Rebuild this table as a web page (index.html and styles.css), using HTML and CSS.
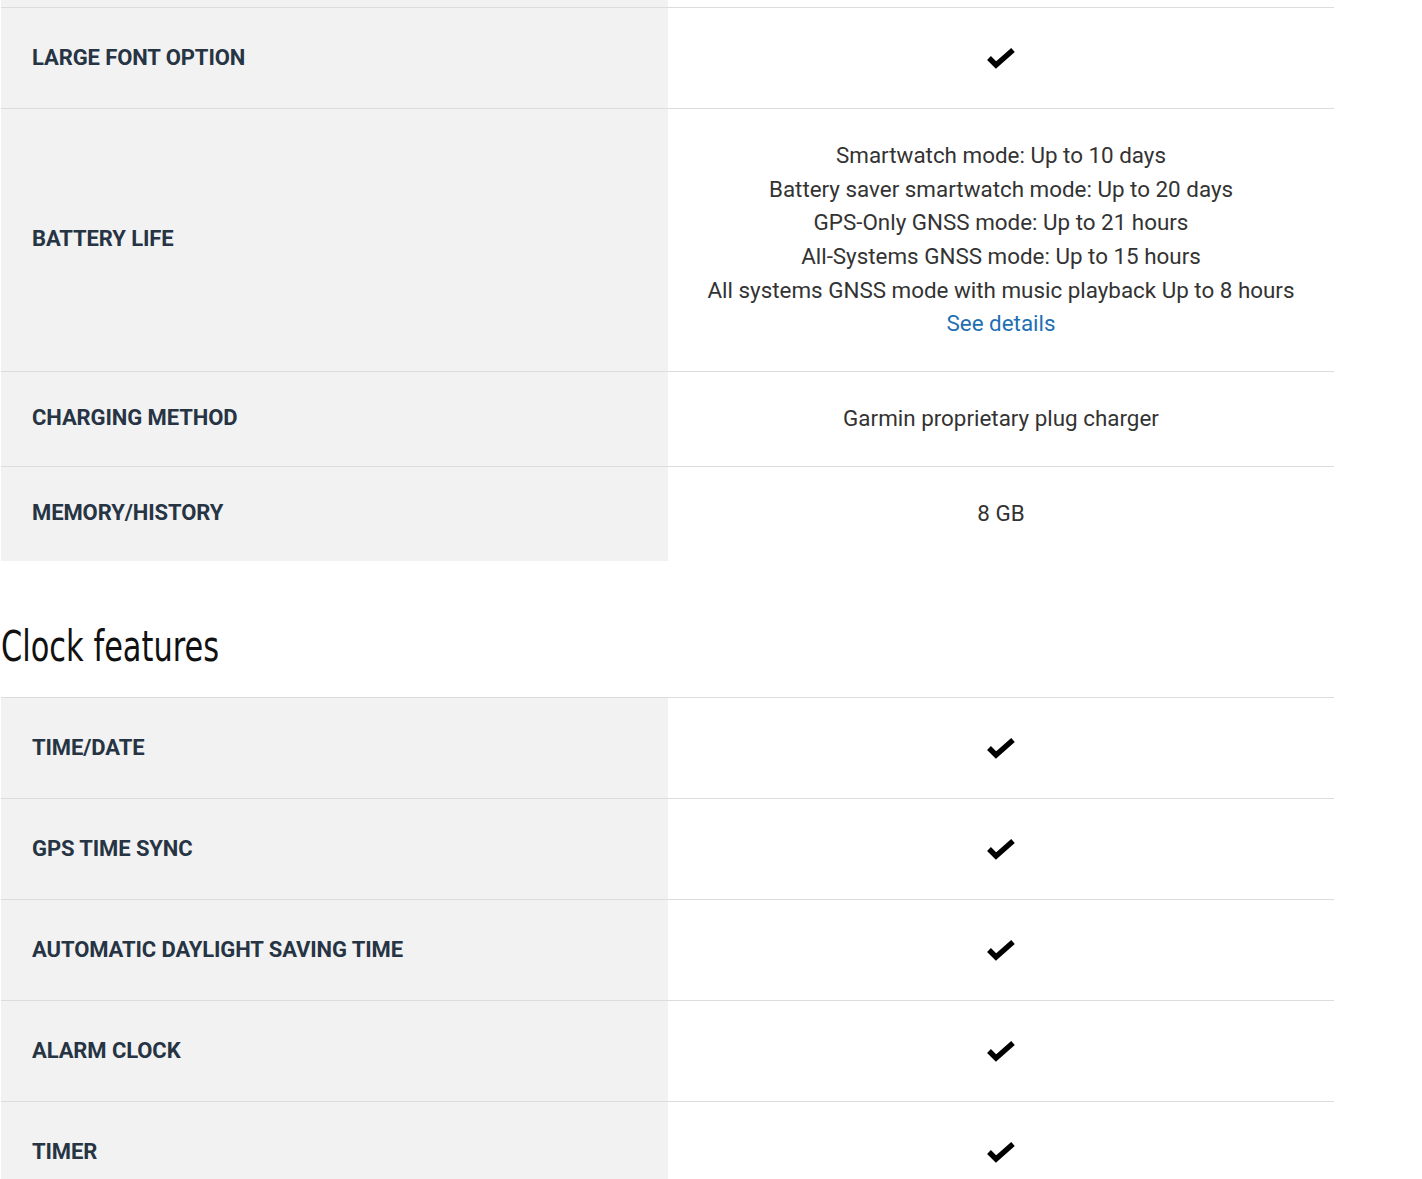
FILE: index.html
```html
<!DOCTYPE html>
<html lang="en">
<head>
<meta charset="utf-8">
<title>Specs</title>
<link rel="stylesheet" href="styles.css">
</head>
<body>
<div class="page">
  <div class="spec-table">
    <div class="row row-stub"><div class="label"></div><div class="value"></div></div>
    <div class="row row-check">
      <div class="label">LARGE FONT OPTION</div>
      <div class="value"><svg class="check" width="28" height="24" viewBox="0 0 28 24"><polyline points="2,12 9,19 26,4" fill="none" stroke="#000" stroke-width="5.4"/></svg></div>
    </div>
    <div class="row">
      <div class="label">BATTERY LIFE</div>
      <div class="value">Smartwatch mode: Up to 10 days<br>Battery saver smartwatch mode: Up to 20 days<br>GPS-Only GNSS mode: Up to 21 hours<br>All-Systems GNSS mode: Up to 15 hours<br>All systems GNSS mode with music playback Up to 8 hours<br><a class="link" href="#">See details</a></div>
    </div>
    <div class="row">
      <div class="label">CHARGING METHOD</div>
      <div class="value">Garmin proprietary plug charger</div>
    </div>
    <div class="row">
      <div class="label">MEMORY/HISTORY</div>
      <div class="value">8 GB</div>
    </div>
  </div>

  <h2 class="section-title"><span class="section-title-text">Clock features</span></h2>

  <div class="spec-table">
    <div class="row row-check">
      <div class="label">TIME/DATE</div>
      <div class="value"><svg class="check" width="28" height="24" viewBox="0 0 28 24"><polyline points="2,12 9,19 26,4" fill="none" stroke="#000" stroke-width="5.4"/></svg></div>
    </div>
    <div class="row row-check">
      <div class="label">GPS TIME SYNC</div>
      <div class="value"><svg class="check" width="28" height="24" viewBox="0 0 28 24"><polyline points="2,12 9,19 26,4" fill="none" stroke="#000" stroke-width="5.4"/></svg></div>
    </div>
    <div class="row row-check">
      <div class="label">AUTOMATIC DAYLIGHT SAVING TIME</div>
      <div class="value"><svg class="check" width="28" height="24" viewBox="0 0 28 24"><polyline points="2,12 9,19 26,4" fill="none" stroke="#000" stroke-width="5.4"/></svg></div>
    </div>
    <div class="row row-check">
      <div class="label">ALARM CLOCK</div>
      <div class="value"><svg class="check" width="28" height="24" viewBox="0 0 28 24"><polyline points="2,12 9,19 26,4" fill="none" stroke="#000" stroke-width="5.4"/></svg></div>
    </div>
    <div class="row row-check">
      <div class="label">TIMER</div>
      <div class="value"><svg class="check" width="28" height="24" viewBox="0 0 28 24"><polyline points="2,12 9,19 26,4" fill="none" stroke="#000" stroke-width="5.4"/></svg></div>
    </div>
  </div>
</div>
</body>
</html>
```

FILE: styles.css
```css
html, body {
  margin: 0;
  padding: 0;
  background: #fff;
}

body {
  font-family: Roboto, "Liberation Sans", sans-serif;
  color: #333;
  overflow: hidden;
}

.page {
  padding-left: 1px;
  width: 1333px;
}

.spec-table {
  display: flex;
  flex-direction: column;
}

.row {
  display: grid;
  grid-template-columns: 667px 666px;
  border-top: 1px solid #dcdcdc;
}

.row-stub {
  border-top: none;
  height: 7px;
}

.label {
  background: #f2f2f2;
  display: flex;
  align-items: center;
  padding: 0 31px 2px 31px;
  font-weight: 700;
  font-size: 22px;
  letter-spacing: -0.1px;
  color: #263444;
}

.value {
  padding: 30.2px 20px;
  text-align: center;
  font-size: 22.4px;
  line-height: 33.6px;
  color: #333;
}

.row-stub .label,
.row-stub .value {
  padding: 0;
}

.row-check .value {
  display: flex;
  align-items: center;
  justify-content: center;
  height: 40px;
  padding: 30px 20px;
}

.check {
  display: block;
}

.link {
  color: #1f6fb3;
  text-decoration: none;
}

.section-title {
  font-family: "DejaVu Sans", sans-serif;
  font-weight: 400;
  font-size: 42px;
  line-height: 49px;
  color: #111;
  margin: 61px 0 26.6px 0;
}

.section-title-text {
  display: inline-block;
  transform: scaleX(0.725);
  transform-origin: left center;
}
```
